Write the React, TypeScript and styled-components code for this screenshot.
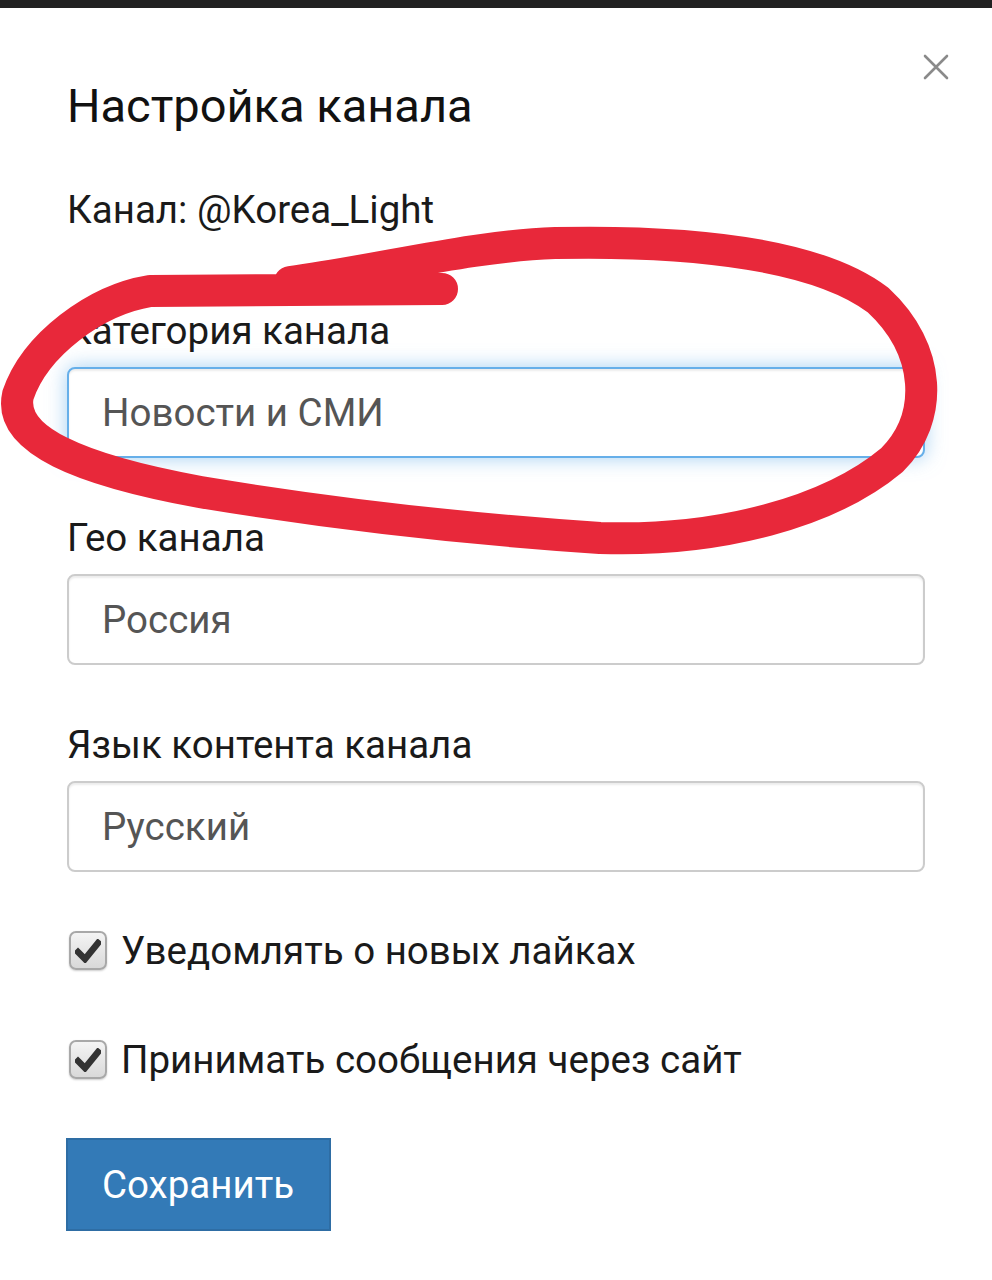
import styled, { createGlobalStyle } from 'styled-components';

const GlobalStyle = createGlobalStyle`
  html, body {
    margin: 0;
    padding: 0;
    background: #fff;
  }
  body {
    font-family: Roboto, "Noto Sans", "Liberation Sans", sans-serif;
    color: #1a1a1a;
  }
`;

const Page = styled.div`
  position: relative;
  width: 992px;
  min-height: 1280px;
  background: #fff;
`;

const TopBar = styled.div`
  height: 8px;
  background: #222;
`;

const Modal = styled.div`
  padding: 71px 67px 0 67px;
`;

const Header = styled.div`
  display: flex;
  justify-content: space-between;
  align-items: flex-start;
  margin-right: -24px;
`;

const Title = styled.h4`
  margin: 0;
  font-size: 47px;
  line-height: 53px;
  font-weight: 400;
  color: #111;
`;

const CloseButton = styled.button`
  border: 0;
  background: none;
  padding: 0;
  margin-top: -25px;
  width: 26px;
  height: 26px;
  cursor: pointer;
  display: flex;
`;

const Body = styled.div`
  margin-top: 51px;
  font-size: 38.5px;
  line-height: 53px;
`;

const ChannelLine = styled.div`
  margin-bottom: 68px;
`;

const FormGroup = styled.div`
  margin-bottom: 53px;
`;

const Label = styled.label`
  display: block;
  margin-bottom: 10px;
  font-size: 38.5px;
  line-height: 53px;
`;

const Input = styled.input<{ $focused?: boolean }>`
  box-sizing: border-box;
  display: block;
  width: 100%;
  height: 91px;
  padding: 0 33px;
  font-family: inherit;
  font-size: 38.5px;
  color: #555;
  background: #fff;
  border: 2px solid ${({ $focused }) => ($focused ? '#66afe9' : '#ccc')};
  border-radius: 8px;
  box-shadow: ${({ $focused }) =>
    $focused
      ? 'inset 0 2px 2px rgba(0,0,0,.075), 0 0 20px rgba(102,175,233,.6)'
      : 'inset 0 2px 2px rgba(0,0,0,.075)'};
  outline: none;
`;

const CheckRow = styled.label<{ $gapAfter: number }>`
  display: flex;
  align-items: center;
  gap: 14px;
  padding-left: 2px;
  margin-top: -1px;
  margin-bottom: ${({ $gapAfter }) => $gapAfter}px;
  font-size: 38.5px;
  line-height: 53px;
`;

const CheckBox = styled.span`
  box-sizing: border-box;
  width: 38px;
  height: 39px;
  border: 2px solid #a8a8a8;
  border-radius: 7px;
  background: linear-gradient(#f4f4f4, #d9d9d9);
  box-shadow: 0 1px 2px rgba(0, 0, 0, 0.2);
  display: flex;
  align-items: center;
  justify-content: center;
`;

const SaveButton = styled.button`
  box-sizing: border-box;
  width: 265px;
  height: 93px;
  margin-left: -1px;
  padding: 0 0 0 34px;
  text-align: left;
  font-family: inherit;
  font-size: 38.5px;
  color: #fff;
  background: #337ab7;
  border: 2px solid #2e6da4;
  border-radius: 0;
  cursor: pointer;
`;

const Scribble = styled.svg`
  position: absolute;
  left: 0;
  top: 0;
  pointer-events: none;
`;

function CheckMark() {
  return (
    <svg width="26" height="24" viewBox="0 0 26 24">
      <path d="M3 13 L10 20 L23 4" fill="none" stroke="#333" strokeWidth="6.5" strokeLinecap="square" strokeLinejoin="miter" />
    </svg>
  );
}

const fields = [
  { label: 'Категория канала', value: 'Новости и СМИ', focused: true },
  { label: 'Гео канала', value: 'Россия', focused: false },
  { label: 'Язык контента канала', value: 'Русский', focused: false },
];

export default function App() {
  return (
    <Page>
      <GlobalStyle />
      <TopBar />
      <Modal>
        <Header>
          <Title>Настройка канала</Title>
          <CloseButton aria-label="Закрыть">
            <svg width="26" height="26" viewBox="0 0 26 26">
              <path d="M2 2 L24 24 M24 2 L2 24" stroke="#8a8a8a" strokeWidth="2.6" strokeLinecap="round" />
            </svg>
          </CloseButton>
        </Header>
        <Body>
          <ChannelLine>Канал: @Korea_Light</ChannelLine>
          {fields.map((f) => (
            <FormGroup key={f.label}>
              <Label>{f.label}</Label>
              <Input $focused={f.focused} defaultValue={f.value} readOnly />
            </FormGroup>
          ))}
          <CheckRow $gapAfter={57}>
            <CheckBox>
              <CheckMark />
            </CheckBox>
            Уведомлять о новых лайках
          </CheckRow>
          <CheckRow $gapAfter={52}>
            <CheckBox>
              <CheckMark />
            </CheckBox>
            Принимать сообщения через сайт
          </CheckRow>
          <SaveButton type="button">Сохранить</SaveButton>
        </Body>
      </Modal>
      <Scribble width="992" height="600" viewBox="0 0 992 600">
        <path
          d="M442 289 L150 291 C95 300 35 345 18 395 C8 440 80 470 200 492 C345 516 480 530 600 538 C720 542 830 512 892 460 C934 418 932 350 878 300 C820 256 700 240 555 243 C470 246 380 270 290 282"
          fill="none"
          stroke="#e8283a"
          strokeWidth="32"
          strokeLinecap="round"
          strokeLinejoin="round"
        />
      </Scribble>
    </Page>
  );
}
